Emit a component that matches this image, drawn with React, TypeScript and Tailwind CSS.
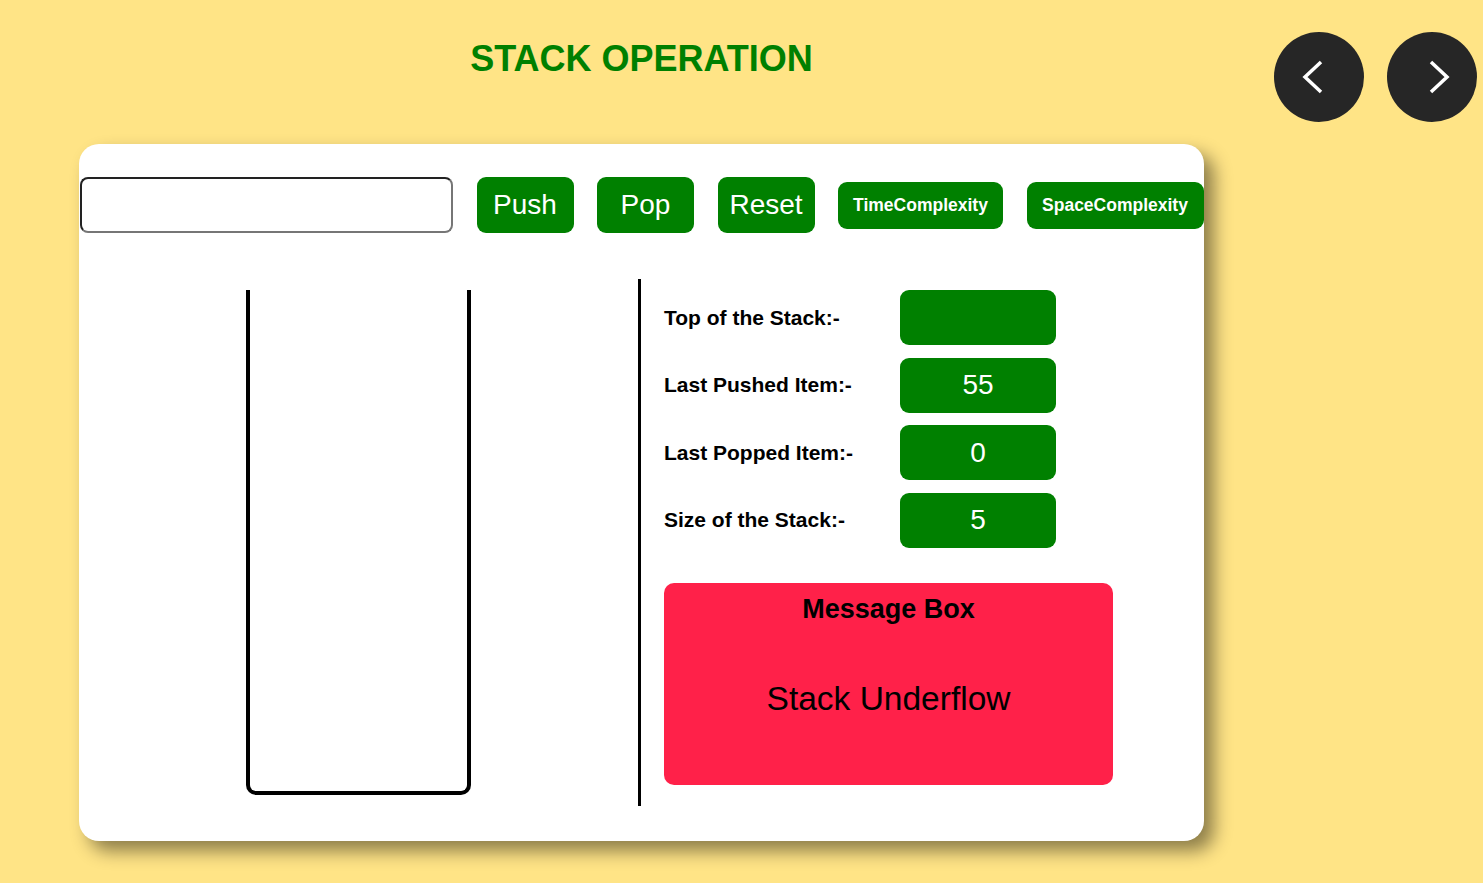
import React from "react";

const stats = [
  { label: "Top of the Stack:-", value: "" },
  { label: "Last Pushed Item:-", value: "55" },
  { label: "Last Popped Item:-", value: "0" },
  { label: "Size of the Stack:-", value: "5" },
];

const NavButton = ({ dir }: { dir: "prev" | "next" }) => (
  <button className="w-[90px] h-[90px] rounded-full bg-[#262626] flex items-center justify-center">
    <svg width="90" height="90" viewBox="0 0 90 90" fill="none">
      <polyline
        points={dir === "prev" ? "47,30 31,45 47,60" : "44,30 60,45 44,60"}
        stroke="#ffffff"
        strokeWidth="3.5"
        strokeLinecap="butt"
        strokeLinejoin="miter"
      />
    </svg>
  </button>
);

const App = () => {
  return (
    <div className="min-h-screen bg-[#ffe486] flex font-['Liberation_Sans',Arial,sans-serif]">
      {/* Main column: title + card */}
      <div className="ml-[79px] w-[1125px] flex flex-col">
        <h1 className="mt-[38px] h-[42px] text-center text-[36px] leading-[42px] font-bold text-[#008000]">
          STACK OPERATION
        </h1>

        <div className="mt-[64px] h-[697px] bg-white rounded-[20px] shadow-[10px_10px_18px_rgba(0,0,0,0.45)]">
          {/* Controls */}
          <div className="mt-[33px] pl-px flex items-center gap-[23.5px]">
            <input
              type="text"
              className="w-[373px] h-[56px] rounded-[8px] border-2 border-t-[#222] border-l-[#222] border-b-[#767676] border-r-[#767676] bg-white outline-none px-2 text-[20px]"
            />
            <button className="w-[97px] h-[56px] rounded-[9px] bg-[#008000] text-white text-[28px]">
              Push
            </button>
            <button className="w-[97px] h-[56px] rounded-[9px] bg-[#008000] text-white text-[28px]">
              Pop
            </button>
            <button className="w-[97px] h-[56px] rounded-[9px] bg-[#008000] text-white text-[28px]">
              Reset
            </button>
            <button className="w-[165px] h-[47px] rounded-[9px] bg-[#008000] text-white text-[17.5px] font-bold">
              TimeComplexity
            </button>
            <button className="w-[177px] h-[47px] rounded-[9px] bg-[#008000] text-white text-[17.5px] font-bold">
              SpaceComplexity
            </button>
          </div>

          {/* Body */}
          <div className="mt-[46px] flex">
            <div className="w-[559px] flex items-center justify-center">
              <div className="w-[225px] h-[505px] border-4 border-t-0 border-black rounded-b-[10px]" />
            </div>
            <div className="w-[3px] h-[527px] bg-black" />
            <div className="pl-[23px] pt-[11px] flex flex-col">
              <div className="flex flex-col gap-[12.5px]">
                {stats.map((s) => (
                  <div key={s.label} className="flex items-center h-[55px]">
                    <span className="w-[236px] text-[21px] font-bold text-black">{s.label}</span>
                    <div className="w-[156px] h-[55px] rounded-[9px] bg-[#008000] flex items-center justify-center text-white text-[28px]">
                      {s.value}
                    </div>
                  </div>
                ))}
              </div>

              <div className="mt-[35px] w-[449px] h-[202px] rounded-[10px] bg-[#ff2149] flex flex-col items-center">
                <div className="mt-[11px] text-[27px] leading-[31px] font-bold text-black">Message Box</div>
                <div className="mt-[55px] text-[33.5px] leading-[38px] text-black">Stack Underflow</div>
              </div>
            </div>
          </div>
        </div>
      </div>

      {/* Navigation */}
      <div className="ml-[70px] mt-[32px] flex gap-[23px] h-[90px]">
        <NavButton dir="prev" />
        <NavButton dir="next" />
      </div>
    </div>
  );
};

export default App;
